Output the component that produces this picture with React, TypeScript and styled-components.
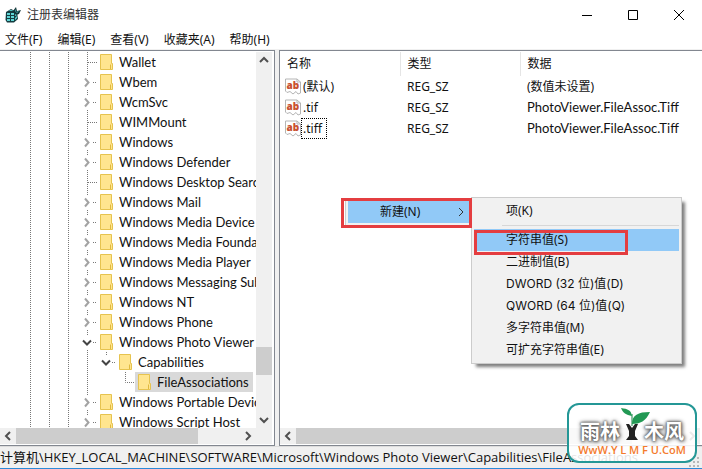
import React from "react";
import styled, { createGlobalStyle, css } from "styled-components";

const Global = createGlobalStyle`
  * { box-sizing: border-box; }
  body { margin: 0; overflow: hidden; }
  button { font: inherit; color: inherit; background: none; border: 0; padding: 0; margin: 0; text-align: left; }
`;

const latinText = css`
  font-family: Lato, "Noto Sans CJK SC", sans-serif;
  font-size: 13px;
`;

const Window = styled.div`
  position: relative;
  display: flex;
  flex-direction: column;
  height: 100vh;
  background: #fff;
  border-bottom: 1px solid #2b8ad8;
  color: #111;
  font: 12px/20px "Noto Sans", "Noto Sans CJK SC", sans-serif;
  white-space: nowrap;
`;

const TitleBar = styled.header`
  display: flex;
  align-items: center;
  height: 30px;
  padding-left: 5px;
  gap: 5px;
`;

const Title = styled.h1`
  flex: 1;
  margin: 0;
  color: #333;
  font-size: 12px;
  font-weight: 400;
`;

const WindowControls = styled.div`
  display: flex;
`;

const WindowButton = styled.button`
  display: flex;
  align-items: center;
  justify-content: center;
  width: 46px;
  height: 28px;
`;

const MenuBar = styled.nav`
  display: flex;
  gap: 15px;
  height: 19px;
  padding-left: 5px;
`;

const Workspace = styled.main`
  display: flex;
  flex: 1;
  min-height: 0;
  gap: 4px;
  padding-top: 1px;
  background: #f0f0f0;
`;

const Pane = styled.section<{ $width?: number }>`
  display: flex;
  flex-direction: column;
  flex: ${(p) => (p.$width ? `0 0 ${p.$width}px` : "1")};
  min-width: 0;
  padding: 1px 2px 1px 0;
  background: #fff;
  border: solid #828790;
  border-width: ${(p) => (p.$width ? "1px 1px 1px 0" : "1px 0 1px 1px")};
`;

const PaneBody = styled.div`
  display: flex;
  flex: 1;
  min-height: 0;
`;

const Tree = styled.ul`
  flex: 1;
  min-width: 0;
  margin: 0;
  padding: 0;
  overflow: hidden;
  list-style: none;
`;

const TreeRow = styled.li`
  display: flex;
  height: 20px;
  padding-left: 21px;
`;

const Guide = styled.svg`
  flex: none;
  width: 19px;
  height: 20px;
`;

const TreeLabel = styled.button<{ $selected?: boolean }>`
  display: flex;
  align-items: center;
  gap: 6px;
  height: 20px;
  padding: 0 4px 0 3px;
  background: ${(p) => (p.$selected ? "#d9d9d9" : "transparent")};
  ${latinText}
`;

const ScrollBar = styled.div<{ $vertical?: boolean }>`
  display: flex;
  flex: none;
  background: #f0f0f0;
  ${(p) =>
    p.$vertical
      ? css`flex-direction: column; width: 16px;`
      : css`height: 16px;`}
`;

const ScrollButton = styled.button`
  display: flex;
  flex: none;
  align-items: center;
  justify-content: center;
  width: 16px;
  height: 16px;
`;

const Track = styled.div<{ $grow: number }>`
  flex: ${(p) => p.$grow} 1 0;
`;

const Thumb = styled(Track)`
  background: #cdcdcd;
`;

const Values = styled.table`
  width: 100%;
  height: max-content;
  table-layout: fixed;
  border-collapse: collapse;
  text-align: left;
`;

const Head = styled.th<{ $width?: number }>`
  width: ${(p) => (p.$width ? `${p.$width}px` : "auto")};
  height: 24px;
  padding: 0 7px;
  font-weight: 400;
  border-right: ${(p) => (p.$width ? "1px solid #e5e5e5" : "0")};
`;

const Cell = styled.td<{ $latin?: boolean }>`
  height: 21px;
  padding: 0 7px;
  line-height: 19px;
  ${(p) => p.$latin && latinText}
`;

const NameCell = styled(Cell)`
  padding: 0 5px;
`;

const NameLine = styled.div`
  display: flex;
  align-items: center;
`;

const ValueName = styled.span<{ $focused?: boolean }>`
  padding: 0 4px 0 1px;
  border: 1px dotted ${(p) => (p.$focused ? "#000" : "transparent")};
`;

const StatusBar = styled.footer`
  display: flex;
  justify-content: space-between;
  height: 22px;
  padding-right: 1px;
  overflow: hidden;
  background: #f0f0f0;
  border-top: 1px solid #dcdcdc;
  font-family: "Open Sans", "Noto Sans CJK SC", sans-serif;
  font-size: 13px;
`;

const Grip = styled.svg`
  flex: none;
  align-self: flex-end;
  width: 12px;
  height: 12px;
`;

const Popup = styled.div<{ $x: number; $y: number; $width: number }>`
  position: absolute;
  left: ${(p) => p.$x}px;
  top: ${(p) => p.$y}px;
  width: ${(p) => p.$width}px;
  padding: 2px;
  background: #f1f1f1;
  border: 1px solid #ccc;
`;

const SubMenu = styled(Popup)`
  box-shadow: 4px 4px 3px -1px rgba(0, 0, 0, 0.5);
`;

const MenuItem = styled.button<{ $active?: boolean; $wide?: boolean }>`
  display: flex;
  align-items: center;
  justify-content: space-between;
  width: 100%;
  height: 22px;
  padding: 0 5px 0 32px;
  background: ${(p) => (p.$active ? "#91c9f7" : "transparent")};
  ${(p) => p.$wide && css`font-family: Inter, "Noto Sans CJK SC", sans-serif;`}
`;

const Divider = styled.hr`
  height: 1px;
  margin: 3px 0 3px 28px;
  background: #d7d7d7;
  border: 0;
`;

const Highlight = styled.div<{ $x: number; $y: number; $width: number; $height: number }>`
  position: absolute;
  left: ${(p) => p.$x}px;
  top: ${(p) => p.$y}px;
  width: ${(p) => p.$width}px;
  height: ${(p) => p.$height}px;
  border: 3px solid #e43d40;
  pointer-events: none;
`;

const Watermark = styled.aside`
  position: absolute;
  right: 5px;
  bottom: 5px;
  width: 130px;
  height: 60px;
  padding-top: 14px;
  background: rgba(255, 255, 255, 0.88);
  border: 2px solid #249796;
  border-radius: 12px;
`;

const Brand = styled.div`
  display: flex;
  align-items: center;
  justify-content: center;
  height: 24px;
  color: #fff;
  font: 700 20px/24px "Noto Sans CJK SC", sans-serif;
  text-shadow: 0 0 2px #555, 0 0 3px #666, 1px 1px 4px #777, 0 0 5px #888;
`;

const Sprout = styled.svg`
  flex: none;
  width: 24px;
  height: 36px;
  margin-top: -10px;
  overflow: visible;
`;

const Site = styled.div`
  color: #f47a2c;
  font: 600 11px/14px "Open Sans", sans-serif;
  text-align: center;
`;

type Node = { name: string; kind: "leaf" | "closed" | "open"; depth?: number };

const nodes: Node[] = [
  { name: "Wallet", kind: "leaf" },
  { name: "Wbem", kind: "closed" },
  { name: "WcmSvc", kind: "closed" },
  { name: "WIMMount", kind: "leaf" },
  { name: "Windows", kind: "closed" },
  { name: "Windows Defender", kind: "closed" },
  { name: "Windows Desktop Search", kind: "leaf" },
  { name: "Windows Mail", kind: "closed" },
  { name: "Windows Media Device Manager", kind: "closed" },
  { name: "Windows Media Foundation", kind: "closed" },
  { name: "Windows Media Player", kind: "closed" },
  { name: "Windows Messaging Subsystem", kind: "closed" },
  { name: "Windows NT", kind: "closed" },
  { name: "Windows Phone", kind: "closed" },
  { name: "Windows Photo Viewer", kind: "open" },
  { name: "Capabilities", kind: "open", depth: 1 },
  { name: "FileAssociations", kind: "leaf", depth: 2 },
  { name: "Windows Portable Devices", kind: "closed" },
  { name: "Windows Script Host", kind: "closed" },
];

const values = [
  ["(默认)", "REG_SZ", "(数值未设置)"],
  [".tif", "REG_SZ", "PhotoViewer.FileAssoc.Tiff"],
  [".tiff", "REG_SZ", "PhotoViewer.FileAssoc.Tiff"],
];

const newItems = [
  "字符串值(S)",
  "二进制值(B)",
  "DWORD (32 位)值(D)",
  "QWORD (64 位)值(Q)",
  "多字符串值(M)",
  "可扩充字符串值(E)",
];

const dots = { stroke: "#777", strokeDasharray: "1 1", fill: "none" };

const Line = () => (
  <Guide viewBox="0 0 19 20"><path d="M9.5 0V20" {...dots} /></Guide>
);

const Blank = () => <Guide viewBox="0 0 19 20" />;

const Joint = ({ kind, last }: { kind: Node["kind"]; last?: boolean }) => (
  <Guide viewBox="0 0 19 20">
    {kind === "leaf" ? (
      <path d={last ? "M9.5 0V10.5H19" : "M9.5 0V20M10 10.5H19"} {...dots} />
    ) : (
      <path d={last ? "M9.5 0V3M15 10.5H19" : "M9.5 0V3M9.5 18V20M15 10.5H19"} {...dots} />
    )}
    {kind === "closed" && <path d="M7 6.5L10.5 10.5L7 14.5" fill="none" stroke="#a3a3a3" strokeWidth="2" />}
    {kind === "open" && <path d="M5 8.5L9 12.5L13 8.5" fill="none" stroke="#444" strokeWidth="2" />}
  </Guide>
);

const Folder = () => (
  <svg width="13" height="16" viewBox="0 0 13 16">
    <path d="M.5.5H11.5V9.5H12.5V15.5H.5Z" fill="#ffe58f" stroke="#e6c34f" />
    <path d="M10.5 15V10.5" stroke="#e0b93f" />
  </svg>
);

const StringIcon = () => (
  <svg width="16" height="17" viewBox="0 0 16 17">
    <path d="M.5 1H12L15.5 4V15L13 16L11 13.5L8 16L5 13.5L2 14.5L.5 13Z" fill="#fff" stroke="#b5b5b5" />
    <path d="M12 1V4H15.5" fill="none" stroke="#b5b5b5" />
    <text x="1.5" y="10.5" fontFamily="Open Sans, sans-serif" fontSize="10" fontWeight="800" fill="#c8502f">ab</text>
  </svg>
);

const arrows = { left: "M10 4L6 8L10 12", right: "M6 4L10 8L6 12", up: "M4 10L8 6L12 10", down: "M4 6L8 10L12 6" };

const Arrow = ({ to }: { to: keyof typeof arrows }) => (
  <ScrollButton aria-label={`Scroll ${to}`}>
    <svg width="16" height="16" viewBox="0 0 16 16">
      <path d={arrows[to]} fill="none" stroke="#505050" strokeWidth="2" />
    </svg>
  </ScrollButton>
);

const RegistryIcon = () => (
  <svg width="17" height="16" viewBox="0 0 17 16">
    <path d="M1 5L6 2L12 5L13 12L9 15.5H2L.5 13Z" fill="#153c40" />
    <path d="M2 6H5V8H2ZM6 6H9V8H6ZM2 9H5V11H2ZM6 9H9V11H6ZM2 12H5V14H2ZM6 12H9V14H6ZM3 4L6 3L9 4ZM10 7L12 6V8L10 9ZM10 11L12 9V11L10 13Z" fill="#5fd6d6" />
    <path d="M8 4L11 0L12 4L16 3L14 7L11 8Z" fill="#123639" />
    <path d="M10 4L11 2V5L14 4L12 6Z" fill="#4db4b9" />
  </svg>
);

export default function App() {
  return (
    <>
      <Global />
      <Window>
        <TitleBar>
          <RegistryIcon />
          <Title>注册表编辑器</Title>
          <WindowControls>
            <WindowButton aria-label="最小化"><svg width="10" height="10"><path d="M0 5.5H10" stroke="#000" /></svg></WindowButton>
            <WindowButton aria-label="最大化"><svg width="10" height="10"><path d="M.5.5H9.5V9.5H.5Z" fill="none" stroke="#000" /></svg></WindowButton>
            <WindowButton aria-label="关闭"><svg width="10" height="10"><path d="M0 0L10 10M10 0L0 10" stroke="#000" /></svg></WindowButton>
          </WindowControls>
        </TitleBar>
        <MenuBar>
          {["文件(F)", "编辑(E)", "查看(V)", "收藏夹(A)", "帮助(H)"].map((m) => <button key={m}>{m}</button>)}
        </MenuBar>
        <Workspace>
          <Pane $width={275}>
            <PaneBody>
              <Tree>
                {nodes.map(({ name, kind, depth = 0 }) => (
                  <TreeRow key={name}>
                    <Line /><Line /><Line />
                    {depth > 0 && <Line />}
                    {depth > 1 && <Blank />}
                    <Joint kind={kind} last={depth > 0} />
                    <TreeLabel $selected={name === "FileAssociations"}><Folder />{name}</TreeLabel>
                  </TreeRow>
                ))}
              </Tree>
              <ScrollBar $vertical>
                <Arrow to="up" /><Track $grow={278} /><Thumb $grow={28} /><Track $grow={37} /><Arrow to="down" />
              </ScrollBar>
            </PaneBody>
            <ScrollBar>
              <Arrow to="left" /><Thumb $grow={181} /><Track $grow={42} /><Arrow to="right" /><Track $grow={16} />
            </ScrollBar>
          </Pane>
          <Pane>
            <PaneBody>
              <Values>
                <thead>
                  <tr><Head $width={120}>名称</Head><Head $width={120}>类型</Head><Head>数据</Head></tr>
                </thead>
                <tbody>
                  {values.map(([name, type, data]) => (
                    <tr key={name}>
                      <NameCell><NameLine><StringIcon /><ValueName $focused={name === ".tiff"}>{name}</ValueName></NameLine></NameCell>
                      <Cell>{type}</Cell>
                      <Cell $latin={data.startsWith("Photo")}>{data}</Cell>
                    </tr>
                  ))}
                </tbody>
              </Values>
            </PaneBody>
            <ScrollBar>
              <Arrow to="left" /><Thumb $grow={320} /><Track $grow={50} /><Arrow to="right" />
            </ScrollBar>
          </Pane>
        </Workspace>
        <StatusBar>
          计算机\HKEY_LOCAL_MACHINE\SOFTWARE\Microsoft\Windows Photo Viewer\Capabilities\FileAssociations
          <Grip viewBox="0 0 12 12">
            <path d="M8 1h2v2h-2ZM8 5h2v2h-2ZM4 5h2v2h-2ZM8 9h2v2h-2ZM4 9h2v2h-2ZM0 9h2v2h-2Z" fill="#b8b8b8" />
          </Grip>
        </StatusBar>

        <Popup $x={345} $y={198} $width={127}>
          <MenuItem $active>新建(N)<svg width="6" height="8"><path d="M1 0L5 4L1 8" fill="none" stroke="#333" /></svg></MenuItem>
        </Popup>
        <SubMenu $x={471} $y={197} $width={211}>
          <MenuItem>项(K)</MenuItem>
          <Divider />
          {newItems.map((item, i) => (
            <MenuItem key={item} $active={i === 0} $wide={item.includes("WORD")}>{item}</MenuItem>
          ))}
        </SubMenu>
        <Highlight $x={341} $y={198} $width={131} $height={30} />
        <Highlight $x={474} $y={230} $width={154} $height={25} />

        <Watermark>
          <Brand>
            雨林
            <Sprout viewBox="0 0 24 36">
              <path d="M6 16H9L12 20L15 16H18L15 23V28L18 32H6L9 28V23Z" fill="#222" />
              <path d="M12 18V6" fill="none" stroke="#168345" strokeWidth="1" />
              <path d="M1 0C8 1 11 2 12 8C6 7 3 5 1 0ZM12 16C12 7 18 4 30 4C26 13 20 16 12 16Z" fill="#229954" />
            </Sprout>
            木风
          </Brand>
          <Site>WwW.Y L M F U.CoM</Site>
        </Watermark>
      </Window>
    </>
  );
}
